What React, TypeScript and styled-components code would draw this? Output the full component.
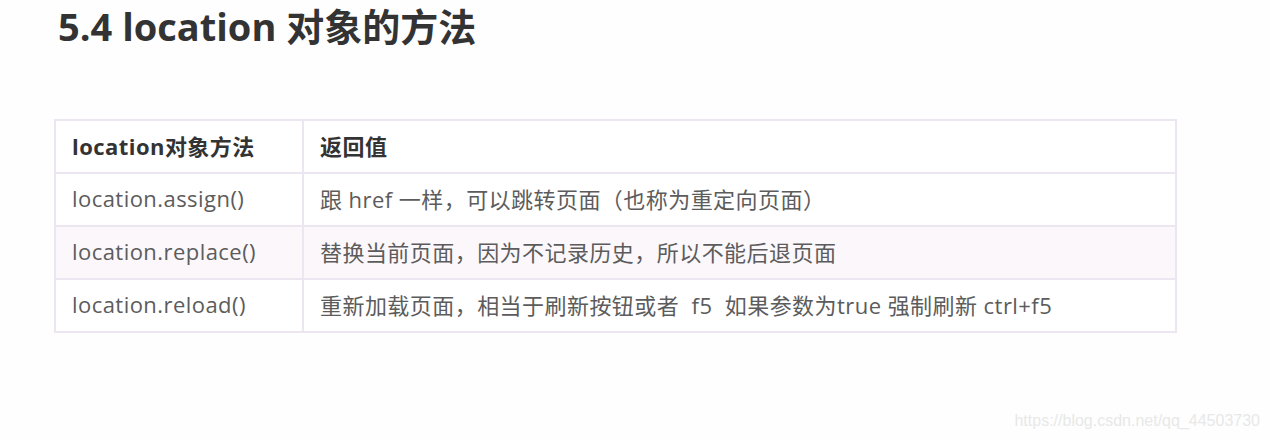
import React from "react";
import styled, { createGlobalStyle } from "styled-components";

const GlobalStyle = createGlobalStyle`
  body {
    margin: 0;
    background: #fefefe;
    font-family: "Open Sans", "Noto Sans CJK SC", sans-serif;
  }
`;

const Page = styled.div`
  position: relative;
  width: 1270px;
  height: 440px;
  overflow: hidden;
  padding: 4px 0 0 58px;
  box-sizing: border-box;
`;

const Title = styled.h1`
  margin: 0;
  font-size: 38px;
  line-height: 44px;
  font-weight: 700;
  color: #333333;
`;

const Table = styled.table`
  margin: 71px 0 0 -4px;
  width: 1123px;
  border-collapse: collapse;
  border: 2px solid #ebe6ef;
  font-size: 22px;
  letter-spacing: 0.45px;
`;

const Row = styled.tr<{ $shaded?: boolean }>`
  height: 53px;
  background: ${(p) => (p.$shaded ? "#fbf7fb" : "#ffffff")};
`;

const HeadCell = styled.th`
  text-align: left;
  font-weight: 700;
  color: #333333;
  padding: 0 16px 4px;
  border: 2px solid #ebe6ef;
`;

const Cell = styled.td`
  color: #5c5c5c;
  padding: 0 16px 4px;
  border: 2px solid #ebe6ef;
  white-space: pre;
`;

const Watermark = styled.div`
  position: absolute;
  right: 10px;
  bottom: 10px;
  font-family: "Liberation Sans", Arial, sans-serif;
  font-size: 16px;
  color: #e8e8e8;
`;

const rows = [
  { method: "location.assign()", value: "跟 href 一样，可以跳转页面（也称为重定向页面）" },
  { method: "location.replace()", value: "替换当前页面，因为不记录历史，所以不能后退页面" },
  { method: "location.reload()", value: "重新加载页面，相当于刷新按钮或者  f5  如果参数为true 强制刷新 ctrl+f5" },
];

export default function App() {
  return (
    <Page>
      <GlobalStyle />
      <Title>5.4 location 对象的方法</Title>
      <Table>
        <thead>
          <Row>
            <HeadCell style={{ width: "214px" }}>location对象方法</HeadCell>
            <HeadCell>返回值</HeadCell>
          </Row>
        </thead>
        <tbody>
          {rows.map((r, i) => (
            <Row key={r.method} $shaded={i === 1}>
              <Cell>{r.method}</Cell>
              <Cell>{r.value}</Cell>
            </Row>
          ))}
        </tbody>
      </Table>
      <Watermark>https://blog.csdn.net/qq_44503730</Watermark>
    </Page>
  );
}
